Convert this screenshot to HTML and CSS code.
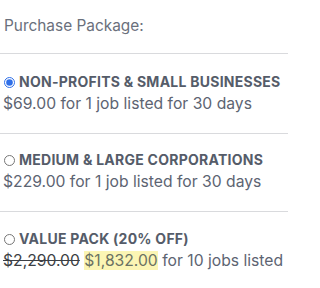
FILE: index.html
```html
<!DOCTYPE html>
<html>
<head>
<meta charset="utf-8">
<link rel="stylesheet" href="styles.css">
</head>
<body>
<div class="package">
  <p class="title">Purchase Package:</p>
  <div class="option option-first">
    <label class="option-head"><input type="radio" name="pkg" checked> NON-PROFITS &amp; SMALL BUSINESSES</label>
    <p class="price">$69.00 for 1 job listed for 30 days</p>
  </div>
  <div class="option">
    <label class="option-head"><input type="radio" name="pkg"> MEDIUM &amp; LARGE CORPORATIONS</label>
    <p class="price">$229.00 for 1 job listed for 30 days</p>
  </div>
  <div class="option option-last">
    <label class="option-head"><input type="radio" name="pkg"> VALUE PACK (20% OFF)</label>
    <p class="price"><s class="old">$2,290.00</s> <mark class="new">$1,832.00</mark> for 10 jobs listed</p>
  </div>
</div>
</body>
</html>
```
FILE: styles.css
```css
html, body {
  margin: 0;
  background: #ffffff;
  overflow: hidden;
}
body {
  font-family: Inter, "Noto Sans", sans-serif;
  color: #5d6472;
}
.package {
  width: 288px;
  overflow: hidden;
}
.title {
  margin: 0;
  padding: 15px 0 0 4px;
  height: 54px;
  box-sizing: border-box;
  font-size: 15.4px;
  line-height: 22px;
  color: #6a707c;
  border-bottom: 1px solid #d9dadd;
}
.option {
  padding: 17px 0 18px 4px;
  border-bottom: 1px solid #d9dadd;
}
.option-first {
  padding-top: 19px;
}
.option-last {
  padding-top: 18px;
  border-bottom: none;
}
.option-head {
  display: flex;
  align-items: center;
  gap: 4px;
  font-size: 14px;
  line-height: 18px;
  font-weight: 700;
  letter-spacing: 0.25px;
  color: #555c69;
  white-space: nowrap;
}
.option-head input {
  margin: 0;
  width: 11px;
  height: 11px;
  accent-color: #2f6fe8;
}
.price {
  margin: 2px 0 0 -1px;
  font-size: 15.7px;
  line-height: 22px;
  white-space: nowrap;
}
.old {
  color: #3c3f45;
}
.new {
  background: #fbf5b4;
  color: #6b7263;
}
```
